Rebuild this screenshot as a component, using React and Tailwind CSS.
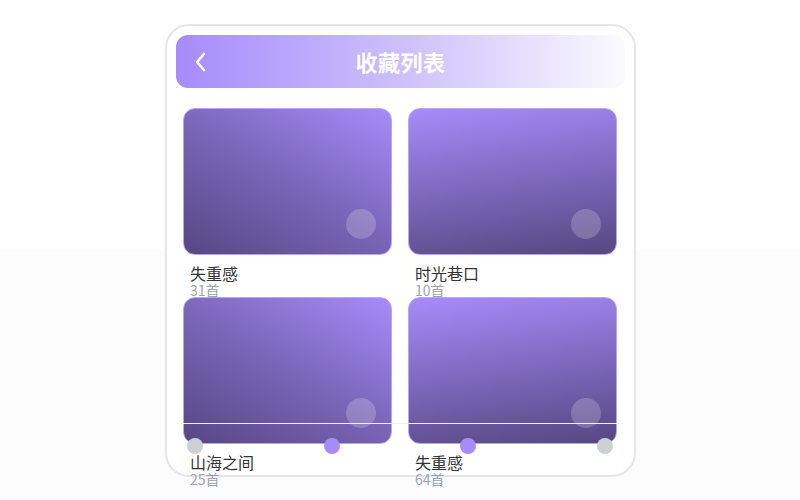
import React from "react";

const items = [
  { title: "失重感", count: "31首", grad: "bg-[linear-gradient(30deg,#574784_0%,#7b65b8_50%,#a78bfa_100%)]" },
  { title: "时光巷口", count: "10首", grad: "bg-[linear-gradient(172deg,#a78bfa_0%,#7f68bd_50%,#564781_100%)]" },
  { title: "山海之间", count: "25首", grad: "bg-[linear-gradient(30deg,#574784_0%,#7b65b8_50%,#a78bfa_100%)]" },
  { title: "失重感", count: "64首", grad: "bg-[linear-gradient(172deg,#a78bfa_0%,#7f68bd_50%,#564781_100%)]" },
];

export default function App() {
  return (
    <div
      className="w-[800px] h-[500px] overflow-hidden bg-[linear-gradient(to_bottom,#ffffff_0%,#ffffff_50%,#fcfcfd_50%,#fcfcfd_100%)] pt-[24px]"
      style={{ fontFamily: '"Noto Sans CJK SC", "Noto Sans", sans-serif' }}
    >
      <div className="relative ml-[165px] w-[471px] h-[453px] rounded-[24px] border-2 border-[#e6e6ea] bg-white p-[9px]">
        <div className="relative flex h-[53px] items-center justify-center rounded-[12px] bg-gradient-to-r from-[#a78bfa] via-[#cdbffb] to-[#fbfaff]">
          <svg className="absolute left-[18px] top-[17px]" width="14" height="20" viewBox="0 0 14 20" fill="none">
            <polyline points="10,2 3,10 10,18" stroke="white" strokeWidth="2.6" strokeLinecap="round" strokeLinejoin="round" />
          </svg>
          <span className="text-[22px] font-bold text-white tracking-[0.5px]">收藏列表</span>
        </div>
        <div className="mt-[20px] grid grid-cols-[209px_209px] auto-rows-[189px] gap-x-4 px-[7px]">
          {items.map((it, i) => (
            <div key={i} className="relative">
              <div className={`relative h-[147px] rounded-[12px] border border-[#b8a6f0] ${it.grad}`}>
                <div className="absolute right-[15px] bottom-[15px] h-[30px] w-[30px] rounded-full bg-white/20" />
              </div>
              <div className="mt-[10px] pl-[7px] text-[16px] leading-[16px] text-[#333333]">{it.title}</div>
              <div className="mt-[2px] pl-[7px] text-[14px] leading-[14px] text-[#9ca3af]">{it.count}</div>
            </div>
          ))}
        </div>
        <div className="absolute left-[10px] top-[397px] w-[446px]">
          <div className="h-px w-full bg-[#f1f1f4]" />
          <div className="mt-[14px] flex justify-between px-[10px]">
            <div className="flex w-[153px] justify-between">
              <div className="h-4 w-4 rounded-full bg-[#cdd1d6]" />
              <div className="h-4 w-4 rounded-full bg-[#a78bfa]" />
            </div>
            <div className="flex w-[153px] justify-between">
              <div className="h-4 w-4 rounded-full bg-[#a78bfa]" />
              <div className="h-4 w-4 rounded-full bg-[#cdd1d6]" />
            </div>
          </div>
        </div>
      </div>
    </div>
  );
}
